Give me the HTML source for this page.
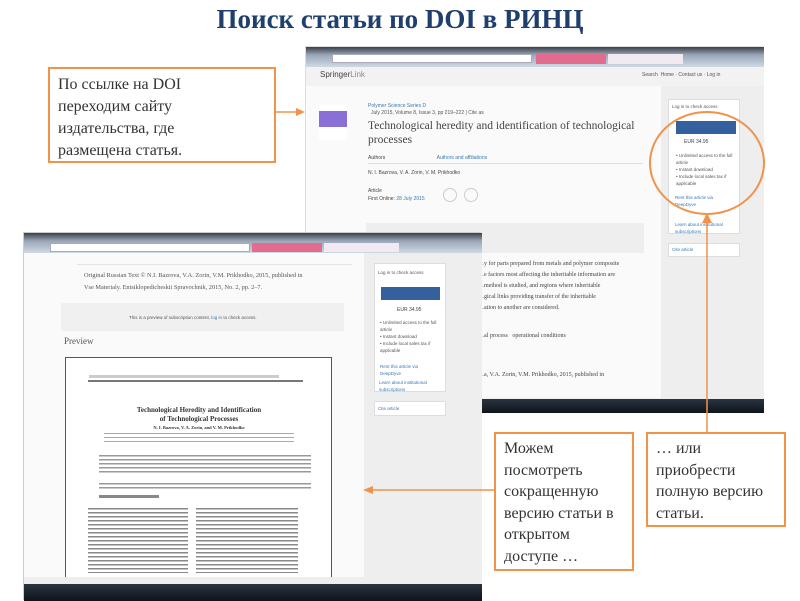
<!DOCTYPE html>
<html><head><meta charset="utf-8"><style>
*{margin:0;padding:0;box-sizing:border-box}
body{width:800px;height:600px;background:#fff;position:relative;overflow:hidden;font-family:"Liberation Serif",serif}
.a{position:absolute}
.title{left:0;width:800px;top:4px;text-align:center;font:bold 27px "Liberation Serif",serif;color:#1f3f6e}
.box{position:absolute;border:2px solid #f0924a;background:#fff;font:16px/22.5px "Liberation Serif",serif;color:#333;padding:4px 8px}
.bar{background:linear-gradient(#3a3f48,#9aa7b8 40%,#cfd9e6);}
.url{background:#fff;border:1px solid #aab;height:9px}
.sans{font-family:"Liberation Sans",sans-serif}
.tl{background:#bbb;height:2px}
.task{background:linear-gradient(#2a3440,#0e141b)}
</style></head><body>
<div class="a title">Поиск статьи по DOI в РИНЦ</div>

<!-- back screenshot -->
<div class="a" style="left:305px;top:46px;width:458px;height:366px;background:#fafafa;border:1px solid #ddd">
 <div class="a bar" style="left:0;top:0;width:458px;height:20px"></div>
 <div class="a url" style="left:26px;top:7px;width:200px"></div>
 <div class="a" style="left:230px;top:7px;width:70px;height:10px;background:#e36b8d"></div>
 <div class="a" style="left:302px;top:7px;width:75px;height:10px;background:#f3e9f3"></div>
 <div class="a" style="left:0;top:20px;width:458px;height:19px;background:#f2f2f2"></div>
 <div class="a sans" style="left:14px;top:23px;font-size:8px;color:#444">Springer<span style="color:#888">Link</span></div>
 <div class="a sans" style="left:336px;top:25px;font-size:5px;color:#555">Search &nbsp;Home · Contact us · Log in</div>
 <div class="a" style="left:355px;top:39px;width:103px;height:312px;background:#eee"></div>
 <div class="a" style="left:13px;top:58px;width:28px;height:35px;background:#fff"></div>
 <div class="a" style="left:13px;top:64px;width:28px;height:16px;background:#8a6fd6"></div>
 <div class="a sans" style="left:62px;top:56px;font-size:5px;color:#3a78b5">Polymer Science Series D</div>
 <div class="a sans" style="left:65px;top:63px;font-size:5px;color:#555">July 2015, Volume 8, Issue 3, pp 219–222 | Cite as</div>
 <div class="a" style="left:62px;top:72px;font-size:11.5px;line-height:14px;color:#444;width:270px">Technological heredity and identification of technological processes</div>
 <div class="a sans" style="left:62px;top:108px;font-size:5px;color:#444">Authors <span style="margin-left:50px;color:#3a78b5">Authors and affiliations</span></div>
 <div class="a" style="left:62px;top:116px;width:275px;height:1px;background:#ddd"></div>
 <div class="a sans" style="left:62px;top:123px;font-size:5px;color:#444">N. I. Bazrova, V. A. Zorin, V. M. Prikhodko</div>
 <div class="a sans" style="left:62px;top:140px;font-size:5px;line-height:8px;color:#444">Article<br>First Online: <span style="color:#3a78b5">28 July 2015</span></div>
 <div class="a" style="left:137px;top:141px;width:14px;height:14px;border:1px solid #ccc;border-radius:50%"></div>
 <div class="a" style="left:158px;top:141px;width:14px;height:14px;border:1px solid #ccc;border-radius:50%"></div>
 <div class="a" style="left:60px;top:176px;width:278px;height:30px;background:#eee"></div>
 <div class="a" style="left:172px;top:212px;font-size:6px;line-height:11px;color:#444;width:175px">…y for parts prepared from metals and polymer composite<br>…e factors most affecting the inheritable information are<br>…method is studied, and regions where inheritable<br>…gical links providing transfer of the inheritable<br>…ation to another are considered.</div>
 <div class="a" style="left:172px;top:286px;font-size:6px;color:#444">…al process &nbsp; operational conditions</div>
 <div class="a" style="left:172px;top:325px;font-size:6px;color:#444">…a, V.A. Zorin, V.M. Prikhodko, 2015, published in</div>
 <div class="a" style="left:362px;top:52px;width:72px;height:135px;background:#fff;border:1px solid #ddd"></div>
 <div class="a sans" style="left:366px;top:57px;font-size:4.5px;color:#555">Log in to check access</div>
 <div class="a" style="left:370px;top:74px;width:60px;height:13px;background:#34609e"></div>
 <div class="a sans" style="left:378px;top:92px;font-size:5px;color:#444">EUR 34.95</div>
 <div class="a sans" style="left:370px;top:105px;font-size:4.5px;line-height:7px;color:#555;width:60px">• Unlimited access to the full article<br>• Instant download<br>• Include local sales tax if applicable</div>
 <div class="a sans" style="left:369px;top:147px;font-size:4.5px;line-height:7px;color:#3a78b5">Rent this article via<br>DeepDyve</div>
 <div class="a sans" style="left:369px;top:174px;font-size:4.5px;line-height:7px;color:#3a78b5">Learn about institutional<br>subscriptions</div>
 <div class="a" style="left:362px;top:196px;width:72px;height:14px;background:#fff;border:1px solid #ddd"></div>
 <div class="a sans" style="left:366px;top:200px;font-size:4.5px;color:#3a78b5">Cite article</div>
 <div class="a" style="left:0;top:351px;width:458px;height:2px;background:#eee"></div>
 <div class="a task" style="left:0;top:352px;width:458px;height:14px"></div>
</div>
<!-- ellipse -->
<svg class="a" style="left:0;top:0" width="800" height="600">
 <ellipse cx="707" cy="163" rx="57" ry="51" fill="none" stroke="#f0924a" stroke-width="2"/>
 <line x1="707" y1="220" x2="707" y2="432" stroke="#f0924a" stroke-width="1.5"/>
 <polygon points="707,213 702,223 712,223" fill="#f0924a"/>
</svg>

<!-- front screenshot -->
<div class="a" style="left:23px;top:232px;width:458px;height:368px;background:#fafafa;border:1px solid #ccc">
 <div class="a bar" style="left:0;top:0;width:458px;height:20px"></div>
 <div class="a url" style="left:26px;top:10px;width:200px"></div>
 <div class="a" style="left:228px;top:10px;width:70px;height:9px;background:#e36b8d"></div>
 <div class="a" style="left:300px;top:10px;width:75px;height:9px;background:#f3e9f3"></div>
 <div class="a" style="left:340px;top:20px;width:118px;height:325px;background:#eee"></div>
 <div class="a" style="left:53px;top:31px;width:275px;height:1px;background:#e4e4e4"></div>
 <div class="a" style="left:60px;top:37px;font-size:6.3px;line-height:11.5px;color:#555">Original Russian Text © N.I. Bazrova, V.A. Zorin, V.M. Prikhodko, 2015, published in<br>Vse Materialy. Entsiklopedicheskii Spravochnik, 2015, No. 2, pp. 2–7.</div>
 <div class="a" style="left:37px;top:70px;width:283px;height:28px;background:#f0f0f0"></div>
 <div class="a sans" style="left:105px;top:82px;font-size:4.5px;color:#555">This is a preview of subscription content, <span style="color:#3a78b5">log in</span> to check access.</div>
 <div class="a" style="left:40px;top:103px;font-size:9px;color:#555">Preview</div>
 <div class="a" style="left:41px;top:124px;width:267px;height:220px;background:#fff;border:1.5px solid #555;border-bottom:none"></div>
 <div class="a tl" style="left:64px;top:147px;width:215px;height:1.5px;background:#777"></div>
 <div class="a" style="left:65px;top:142px;width:190px;height:3px;background:#ccc"></div>
 <div class="a" style="left:60px;top:173px;width:230px;text-align:center;font-weight:bold;font-size:7px;line-height:8.5px;color:#333">Technological Heredity and Identification<br>of Technological Processes</div>
 <div class="a" style="left:60px;top:192px;width:230px;text-align:center;font-weight:bold;font-size:4.5px;color:#333">N. I. Bazrova, V. A. Zorin, and V. M. Prikhodko</div>
 <div class="a" style="left:80px;top:199px;width:190px;height:12px;background:repeating-linear-gradient(#fff 0 1px,#aaa 1px 2px,#fff 2px 4px)"></div>
 <div class="a" style="left:75px;top:221px;width:212px;height:20px;background:repeating-linear-gradient(#fff 0 1px,#999 1px 2.5px,#fff 2.5px 4px)"></div>
 <div class="a" style="left:75px;top:249px;width:212px;height:7px;background:repeating-linear-gradient(#fff 0 1px,#999 1px 2.5px,#fff 2.5px 4px)"></div>
 <div class="a" style="left:75px;top:262px;width:60px;height:3px;background:#888"></div>
 <div class="a" style="left:64px;top:274px;width:100px;height:66px;background:repeating-linear-gradient(#fff 0 1px,#888 1px 2.5px,#fff 2.5px 4px)"></div>
 <div class="a" style="left:172px;top:274px;width:102px;height:66px;background:repeating-linear-gradient(#fff 0 1px,#888 1px 2.5px,#fff 2.5px 4px)"></div>
 <div class="a" style="left:350px;top:30px;width:72px;height:129px;background:#fff;border:1px solid #ddd"></div>
 <div class="a sans" style="left:354px;top:37px;font-size:4.5px;color:#555">Log in to check access</div>
 <div class="a" style="left:357px;top:54px;width:59px;height:13px;background:#34609e"></div>
 <div class="a sans" style="left:373px;top:74px;font-size:5px;color:#444">EUR 34.95</div>
 <div class="a sans" style="left:356px;top:86px;font-size:4.5px;line-height:7px;color:#555;width:60px">• Unlimited access to the full article<br>• Instant download<br>• Include local sales tax if applicable</div>
 <div class="a sans" style="left:356px;top:130px;font-size:4.5px;line-height:7px;color:#3a78b5">Rent this article via<br>DeepDyve</div>
 <div class="a sans" style="left:355px;top:146px;font-size:4.5px;line-height:7px;color:#3a78b5">Learn about institutional<br>subscriptions</div>
 <div class="a" style="left:350px;top:168px;width:72px;height:15px;background:#fff;border:1px solid #ddd"></div>
 <div class="a sans" style="left:354px;top:173px;font-size:4.5px;color:#3a78b5">Cite article</div>
 <div class="a" style="left:0;top:344px;width:458px;height:7px;background:#eee"></div>
 <div class="a task" style="left:0;top:351px;width:458px;height:17px"></div>
</div>

<svg class="a" style="left:0;top:0" width="800" height="600">
 <line x1="275" y1="112" x2="298" y2="112" stroke="#f0924a" stroke-width="1.5"/>
 <polygon points="305,112 296,108 296,116" fill="#f0924a"/>
 <line x1="494" y1="490" x2="370" y2="490" stroke="#f0924a" stroke-width="1.5"/>
 <polygon points="363,490 373,486 373,494" fill="#f0924a"/>
</svg>

<div class="box" style="left:48px;top:67px;width:228px;height:96px;line-height:22px;padding-top:5px">По ссылке на DOI<br>переходим сайту<br>издательства, где<br>размещена статья.</div>
<div class="box" style="left:494px;top:432px;width:140px;height:139px;line-height:21.5px">Можем<br>посмотреть<br>сокращенную<br>версию статьи в<br>открытом<br>доступе …</div>
<div class="box" style="left:646px;top:432px;width:140px;height:95px;line-height:21.5px">… или<br>приобрести<br>полную версию<br>статьи.</div>
</body></html>
